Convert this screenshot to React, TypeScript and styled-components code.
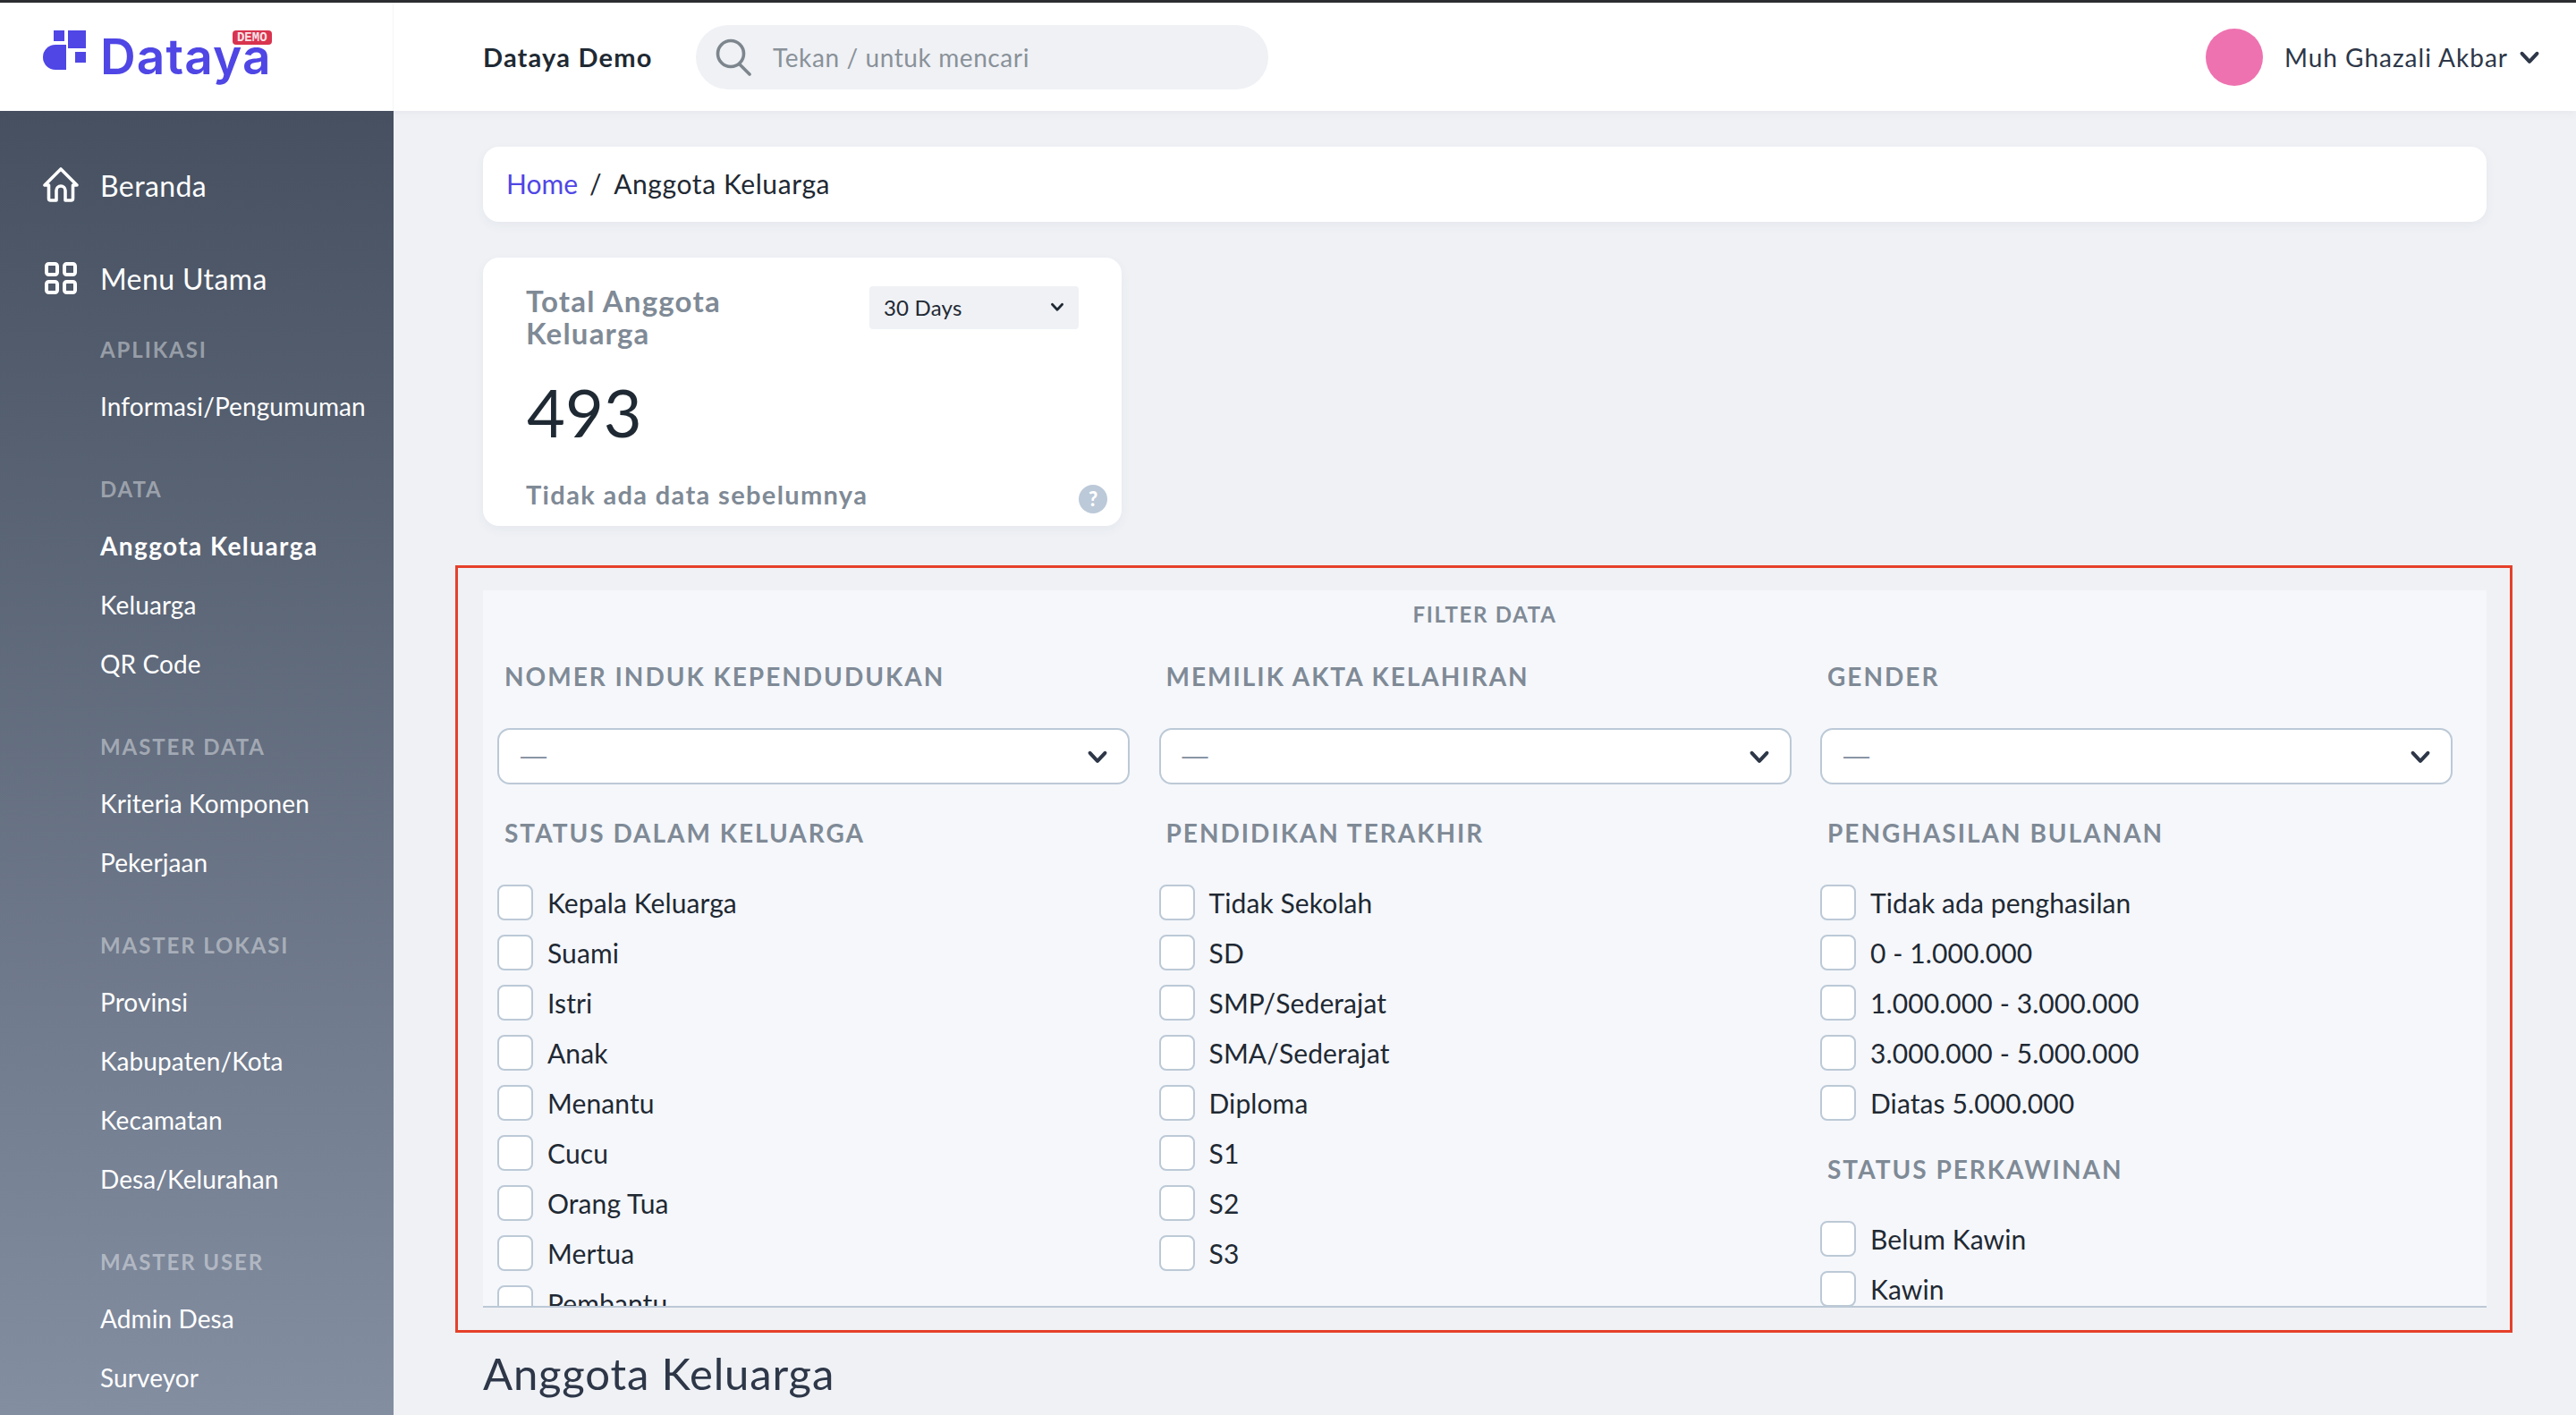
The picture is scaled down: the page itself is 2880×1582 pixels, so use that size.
import React from "react";
import styled, { createGlobalStyle } from "styled-components";

const Global = createGlobalStyle`
    html, body {
        margin: 0;
        padding: 0;
        background: #eff1f5;
    }
    * {
        box-sizing: border-box;
    }
    body {
        font-family: "Lato", "Noto Sans", sans-serif;
        color: #1f2933;
    }
`;

const Page = styled.div`
    width: 2880px;
    height: 1582px;
    overflow: hidden;
    display: flex;
    flex-direction: column;
    border-top: 3px solid #2b2d31;
`;

const Header = styled.header`
    height: 121px;
    flex: none;
    display: flex;
    align-items: center;
    background: #fff;
    box-shadow: 0 2px 10px rgba(60, 70, 90, 0.06);
    position: relative;
`;

const LogoCell = styled.div`
    width: 440px;
    height: 100%;
    flex: none;
    display: flex;
    align-items: center;
    gap: 16px;
    padding: 0 0 11px 48px;
    border-right: 1px solid #f4f5f8;
`;

const LogoWord = styled.div`
    position: relative;
    margin-top: 10px;
    font-family: "Inter", sans-serif;
    font-size: 55px;
    font-weight: 600;
    line-height: 60px;
    letter-spacing: 1.1px;
    color: #4f46e5;
`;

const DemoBadge = styled.span`
    position: absolute;
    top: 1px;
    right: 0;
    width: 44px;
    height: 16px;
    border-radius: 4px;
    background: #d8344f;
    color: #fbe3e7;
    font-family: "Liberation Mono", monospace;
    font-size: 14px;
    font-weight: 700;
    letter-spacing: 0;
    line-height: 16px;
    text-align: center;
`;

const HeaderBody = styled.div`
    flex: 1;
    display: flex;
    align-items: center;
    padding: 0 40px 0 100px;
`;

const AppName = styled.div`
    font-size: 29px;
    font-weight: 700;
    letter-spacing: 1.2px;
    width: 238px;
    color: #1f2933;
`;

const SearchBox = styled.div`
    width: 640px;
    height: 72px;
    border-radius: 36px;
    background: #eff1f5;
    display: flex;
    align-items: center;
    gap: 22px;
    padding-left: 22px;
    color: #8a9199;
    font-size: 28px;
    letter-spacing: 0.6px;
`;

const UserMenu = styled.div`
    margin-left: auto;
    display: flex;
    align-items: center;
    font-size: 28px;
    letter-spacing: 1px;
    color: #2d3748;
`;

const Avatar = styled.div`
    width: 64px;
    height: 64px;
    border-radius: 50%;
    background: #ee72b0;
    margin-right: 24px;
`;

const UserName = styled.span`
    margin-right: 12px;
`;

const Body = styled.div`
    flex: 1;
    display: flex;
    min-height: 0;
`;

const Sidebar = styled.nav`
    width: 440px;
    flex: none;
    padding-top: 63px;
    overflow: hidden;
    background: linear-gradient(180deg, #465060 0%, #838ea1 100%);
    color: #fff;
`;

const MainItem = styled.div`
    height: 40px;
    display: flex;
    align-items: center;
    gap: 24px;
    padding-left: 48px;
    font-size: 32px;
    letter-spacing: 0.4px;
    & + & {
        margin-top: 64px;
    }
`;

const NavGroup = styled.div`
    margin-top: 44px;
    padding-left: 112px;
`;

const NavHeading = styled.div`
    height: 32px;
    line-height: 32px;
    margin-bottom: 14px;
    font-size: 24px;
    font-weight: 700;
    letter-spacing: 1.9px;
    color: rgba(255, 255, 255, 0.42);
`;

const NavLink = styled.div<{ $active?: boolean }>`
    height: 66px;
    line-height: 66px;
    font-size: 28px;
    white-space: nowrap;
    letter-spacing: ${(p) => (p.$active ? "1.4px" : "0.1px")};
    font-weight: ${(p) => (p.$active ? 700 : 400)};
`;

const Main = styled.main`
    flex: 1;
    min-width: 0;
    padding: 40px 100px 0;
`;

const Breadcrumb = styled.div`
    height: 84px;
    border-radius: 18px;
    background: #fff;
    box-shadow: 0 4px 12px rgba(60, 70, 90, 0.05);
    display: flex;
    align-items: center;
    gap: 13px;
    padding: 0 0 2px 26px;
    font-size: 30px;
    letter-spacing: 0.6px;
    color: #1f2933;
`;

const Crumb = styled.a`
    color: #4f46e5;
    text-decoration: none;
    letter-spacing: 0;
`;

const StatCard = styled.section`
    position: relative;
    width: 714px;
    height: 300px;
    margin-top: 40px;
    padding: 30px 48px 0;
    border-radius: 18px;
    background: #fff;
    box-shadow: 0 4px 12px rgba(60, 70, 90, 0.05);
`;

const StatTop = styled.div`
    display: flex;
    justify-content: space-between;
    align-items: flex-start;
`;

const StatTitle = styled.div`
    width: 320px;
    font-size: 33px;
    font-weight: 700;
    letter-spacing: 1.2px;
    line-height: 36px;
    color: #7f8a96;
`;

const RangeSelect = styled.div`
    width: 234px;
    height: 48px;
    margin-top: 2px;
    border-radius: 4px;
    background: #eff1f5;
    display: flex;
    align-items: center;
    justify-content: space-between;
    padding: 0 16px 2px;
    font-size: 24px;
    letter-spacing: 0.2px;
    color: #1f2933;
`;

const StatValue = styled.div`
    margin-top: 29px;
    margin-left: 1px;
    font-size: 74px;
    line-height: 84px;
    color: #1f2933;
`;

const StatNote = styled.div`
    margin-top: 32px;
    font-size: 29px;
    font-weight: 700;
    letter-spacing: 1.35px;
    line-height: 36px;
    color: #7f8a96;
`;

const HelpDot = styled.span`
    position: absolute;
    right: 16px;
    bottom: 14px;
    width: 32px;
    height: 32px;
    border-radius: 50%;
    background: #bcc9d8;
    color: #fff;
    font-size: 22px;
    font-weight: 900;
    line-height: 32px;
    text-align: center;
`;

const Highlight = styled.div`
    margin: 44px -29px 0 -31px;
    padding: 25px 26px 25px 28px;
    border: 3px solid #e5402a;
`;

const FilterPanel = styled.section`
    height: 802px;
    overflow: hidden;
    padding: 11px 0 0 16px;
    background: #f5f7fb;
    border-bottom: 2px solid #bcc9d6;
`;

const FilterTitle = styled.div`
    height: 32px;
    margin: 0 0 33px -16px;
    line-height: 32px;
    text-align: center;
    font-size: 24px;
    font-weight: 700;
    letter-spacing: 1.7px;
    color: #7f8a96;
`;

const FilterColumns = styled.div`
    display: grid;
    grid-template-columns: repeat(3, 739.5px);
`;

const FilterColumn = styled.div`
    display: flex;
    flex-direction: column;
    gap: 34px;
`;

const FieldLabel = styled.div`
    height: 40px;
    margin-bottom: 38px;
    padding-left: 8px;
    line-height: 40px;
    font-size: 28px;
    font-weight: 700;
    letter-spacing: 2px;
    color: #7f8a96;
`;

const SelectBox = styled.div`
    width: 707px;
    height: 63px;
    display: flex;
    align-items: center;
    justify-content: space-between;
    padding: 0 22px 0 24px;
    border: 2px solid #bcc9d6;
    border-radius: 14px;
    background: #fff;
`;

const EmptyValue = styled.span`
    font-family: "Liberation Sans", sans-serif;
    font-size: 29px;
    color: #8a95a5;
`;

const CheckList = styled.div`
    display: flex;
    flex-direction: column;
    gap: 16px;
`;

const CheckRow = styled.label`
    height: 40px;
    display: flex;
    align-items: center;
    gap: 16px;
    font-size: 30px;
    letter-spacing: 0.1px;
    color: #1f2933;
`;

const CheckBox = styled.span`
    width: 40px;
    height: 40px;
    flex: none;
    border: 2px solid #bcc9d6;
    border-radius: 8px;
    background: #fff;
`;

const PageTitle = styled.h1`
    margin: 15px 0 0;
    font-size: 49px;
    font-weight: 400;
    letter-spacing: 0.85px;
    line-height: 60px;
    color: #2d3748;
`;

const Chevron = ({ size = 20, color = "#2d3748" }: { size?: number; color?: string }) => (
    <svg width={size} height={size} viewBox="0 0 20 20" fill="none">
        <path d="M3 6.5 10 14l7-7.5" stroke={color} strokeWidth="3.4" strokeLinecap="round" strokeLinejoin="round" />
    </svg>
);

const LogoMark = () => (
    <svg width="48" height="48" viewBox="0 0 48 48" fill="#4f46e5">
        <rect x="12" width="12" height="12" />
        <rect x="28" width="20" height="20" />
        <rect x="36" y="24" width="12" height="12" />
        <path d="M26 16H14a14 14 0 0 0 0 28h12z" />
    </svg>
);

const HomeIcon = () => (
    <svg width="40" height="40" viewBox="0 0 40 40" fill="none" stroke="#fff" strokeWidth="3.6" strokeLinejoin="round">
        <path d="M20 2 2 20h4.500v15a2 2 0 0 0 2 2H15V26a5 5 0 0 1 10 0v11h6.500a2 2 0 0 0 2-2V20H38z" />
    </svg>
);

const GridIcon = () => (
    <svg width="40" height="40" viewBox="0 0 40 40" fill="none" stroke="#fff" strokeWidth="4">
        <rect x="4" y="4" width="12" height="12" rx="2.500" />
        <rect x="24" y="4" width="12" height="12" rx="2.500" />
        <rect x="4" y="24" width="12" height="12" rx="2.500" />
        <rect x="24" y="24" width="12" height="12" rx="2.500" />
    </svg>
);

const SearchIcon = () => (
    <svg width="42" height="42" viewBox="0 0 42 42" fill="none" stroke="#7d858d" strokeWidth="3.6" strokeLinecap="round">
        <circle cx="17" cy="17" r="14.500" />
        <path d="m27 29 11 11" />
    </svg>
);

const navGroups = [
    { title: "APLIKASI", items: ["Informasi/Pengumuman"] },
    { title: "DATA", items: ["Anggota Keluarga", "Keluarga", "QR Code"] },
    { title: "MASTER DATA", items: ["Kriteria Komponen", "Pekerjaan"] },
    { title: "MASTER LOKASI", items: ["Provinsi", "Kabupaten/Kota", "Kecamatan", "Desa/Kelurahan"] },
    { title: "MASTER USER", items: ["Admin Desa", "Surveyor"] },
];

const filterColumns = [
    [
        { label: "NOMER INDUK KEPENDUDUKAN", select: true },
        {
            label: "STATUS DALAM KELUARGA",
            options: ["Kepala Keluarga", "Suami", "Istri", "Anak", "Menantu", "Cucu", "Orang Tua", "Mertua", "Pembantu"],
        },
    ],
    [
        { label: "MEMILIK AKTA KELAHIRAN", select: true },
        {
            label: "PENDIDIKAN TERAKHIR",
            options: ["Tidak Sekolah", "SD", "SMP/Sederajat", "SMA/Sederajat", "Diploma", "S1", "S2", "S3"],
        },
    ],
    [
        { label: "GENDER", select: true },
        {
            label: "PENGHASILAN BULANAN",
            options: ["Tidak ada penghasilan", "0 - 1.000.000", "1.000.000 - 3.000.000", "3.000.000 - 5.000.000", "Diatas 5.000.000"],
        },
        { label: "STATUS PERKAWINAN", options: ["Belum Kawin", "Kawin"] },
    ],
];

export default function App() {
    return (
        <Page>
            <Global />
            <Header>
                <LogoCell>
                    <LogoMark />
                    <LogoWord>
                        Dataya
                        <DemoBadge>DEMO</DemoBadge>
                    </LogoWord>
                </LogoCell>
                <HeaderBody>
                    <AppName>Dataya Demo</AppName>
                    <SearchBox>
                        <SearchIcon />
                        Tekan / untuk mencari
                    </SearchBox>
                    <UserMenu>
                        <Avatar />
                        <UserName>Muh Ghazali Akbar</UserName>
                        <Chevron size={24} />
                    </UserMenu>
                </HeaderBody>
            </Header>
            <Body>
                <Sidebar>
                    <MainItem>
                        <HomeIcon />
                        Beranda
                    </MainItem>
                    <MainItem>
                        <GridIcon />
                        Menu Utama
                    </MainItem>
                    {navGroups.map((group) => (
                        <NavGroup key={group.title}>
                            <NavHeading>{group.title}</NavHeading>
                            {group.items.map((item) => (
                                <NavLink key={item} $active={item === "Anggota Keluarga"}>
                                    {item}
                                </NavLink>
                            ))}
                        </NavGroup>
                    ))}
                </Sidebar>
                <Main>
                    <Breadcrumb>
                        <Crumb href="#home">Home</Crumb>
                        <span>/</span>
                        <span>Anggota Keluarga</span>
                    </Breadcrumb>
                    <StatCard>
                        <StatTop>
                            <StatTitle>Total Anggota Keluarga</StatTitle>
                            <RangeSelect>
                                30 Days
                                <Chevron size={16} color="#1f2933" />
                            </RangeSelect>
                        </StatTop>
                        <StatValue>493</StatValue>
                        <StatNote>Tidak ada data sebelumnya</StatNote>
                        <HelpDot>?</HelpDot>
                    </StatCard>
                    <Highlight>
                        <FilterPanel>
                            <FilterTitle>FILTER DATA</FilterTitle>
                            <FilterColumns>
                                {filterColumns.map((column) => (
                                    <FilterColumn key={column[0].label}>
                                        {column.map((field) => (
                                            <div key={field.label}>
                                                <FieldLabel>{field.label}</FieldLabel>
                                                {field.select && (
                                                    <SelectBox>
                                                        <EmptyValue>—</EmptyValue>
                                                        <Chevron size={24} />
                                                    </SelectBox>
                                                )}
                                                {field.options && (
                                                    <CheckList>
                                                        {field.options.map((option) => (
                                                            <CheckRow key={option}>
                                                                <CheckBox />
                                                                {option}
                                                            </CheckRow>
                                                        ))}
                                                    </CheckList>
                                                )}
                                            </div>
                                        ))}
                                    </FilterColumn>
                                ))}
                            </FilterColumns>
                        </FilterPanel>
                    </Highlight>
                    <PageTitle>Anggota Keluarga</PageTitle>
                </Main>
            </Body>
        </Page>
    );
}
